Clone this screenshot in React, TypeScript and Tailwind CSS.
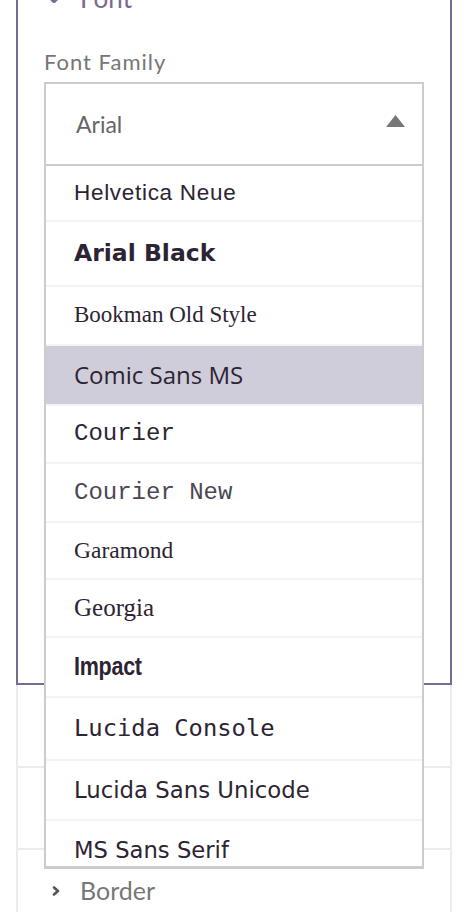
import React from "react";

type Item = { label: string; h: string; cls: string; active?: boolean };

const items: Item[] = [
  { label: "Helvetica Neue", h: "h-[56px]", cls: "font-['Liberation_Sans',sans-serif] text-[22.5px] tracking-[0.7px]" },
  { label: "Arial Black", h: "h-[65px]", cls: "font-['DejaVu_Sans',sans-serif] font-bold text-[23.5px]" },
  { label: "Bookman Old Style", h: "h-[59px]", cls: "font-['Liberation_Serif',serif] text-[23px]" },
  { label: "Comic Sans MS", h: "h-[60px]", cls: "font-['Open_Sans',sans-serif] text-[24px]", active: true },
  { label: "Courier", h: "h-[58px]", cls: "font-['Liberation_Mono',monospace] text-[24px]" },
  { label: "Courier New", h: "h-[59px]", cls: "font-['Liberation_Mono',monospace] text-[24px] text-[#4d4652]" },
  { label: "Garamond", h: "h-[57px]", cls: "font-['Liberation_Serif',serif] text-[23.5px]" },
  { label: "Georgia", h: "h-[58px]", cls: "font-['Liberation_Serif',serif] text-[25px]" },
  { label: "Impact", h: "h-[60px]", cls: "inline-block origin-left scale-x-[0.86] font-['Liberation_Sans',sans-serif] font-bold text-[25px] tracking-[-0.3px]" },
  { label: "Lucida Console", h: "h-[63px]", cls: "font-['DejaVu_Sans_Mono',monospace] text-[23.8px]" },
  { label: "Lucida Sans Unicode", h: "h-[60px]", cls: "font-['DejaVu_Sans',sans-serif] text-[22.8px]" },
  { label: "MS Sans Serif", h: "h-[60px]", cls: "font-['DejaVu_Sans',sans-serif] text-[22.7px]" },
];

export default function App() {
  return (
    <div className="w-[474px] h-[912px] overflow-hidden bg-white font-['Lato',sans-serif]">
      <div className="ml-4 w-[436px] -mt-[32px]">
        {/* Font section (open) */}
        <div className="border-2 border-[#776a94] px-[26px] pb-[517px]">
          <div className="h-[56px] flex items-center -mx-[26px] pl-[28px]">
            <svg width="16" height="12" viewBox="0 0 16 12" className="shrink-0">
              <polyline points="2,3 8,9 14,3" fill="none" stroke="#776a94" strokeWidth="4" strokeLinecap="round" strokeLinejoin="round" />
            </svg>
            <span className="ml-[18px] text-[26px] leading-[30px] text-[#776a94]">Font</span>
          </div>
          <div className="mt-[23px] text-[22px] leading-[26px] tracking-[1px] text-[#767676]">Font Family</div>
          <div className="relative mt-[7px]">
            <div className="h-[84px] border-2 border-[#cccccc] flex items-center justify-between pl-[30px] pr-[17px]">
              <span className="text-[23px] text-[#666666]">Arial</span>
              <svg width="19" height="12" viewBox="0 0 19 12" className="mb-[6px]">
                <polygon points="9.5,0 19,12 0,12" fill="#777777" />
              </svg>
            </div>
            <div className="absolute left-0 right-0 top-full z-10 bg-white border-x-2 border-b-[3px] border-[#cccccc] h-[703px] overflow-hidden">
              {items.map((it) => (
                <div
                  key={it.label}
                  className={`${it.h} flex items-center pl-[28px] border-b-2 border-[#f4f4f4] text-[#2d2433] ${it.active ? "bg-[#d0cdda]" : "bg-white"}`}
                >
                  <span className={`${it.cls} whitespace-nowrap`}>{it.label}</span>
                </div>
              ))}
            </div>
          </div>
        </div>
        {/* Collapsed sections */}
        <div className="h-[83px] border-x-2 border-b-2 border-[#ececec]" />
        <div className="h-[82px] border-x-2 border-b-2 border-[#ececec]" />
        <div className="h-[82px] border-x-2 border-[#ececec] flex items-center pl-[34px]">
          <svg width="8" height="10" viewBox="0 0 8 10" className="shrink-0">
            <polyline points="2,1.5 6,5 2,8.5" fill="none" stroke="#555555" strokeWidth="2.6" strokeLinecap="round" strokeLinejoin="round" />
          </svg>
          <span className="ml-[20px] text-[25px] text-[#777777]">Border</span>
        </div>
      </div>
    </div>
  );
}
